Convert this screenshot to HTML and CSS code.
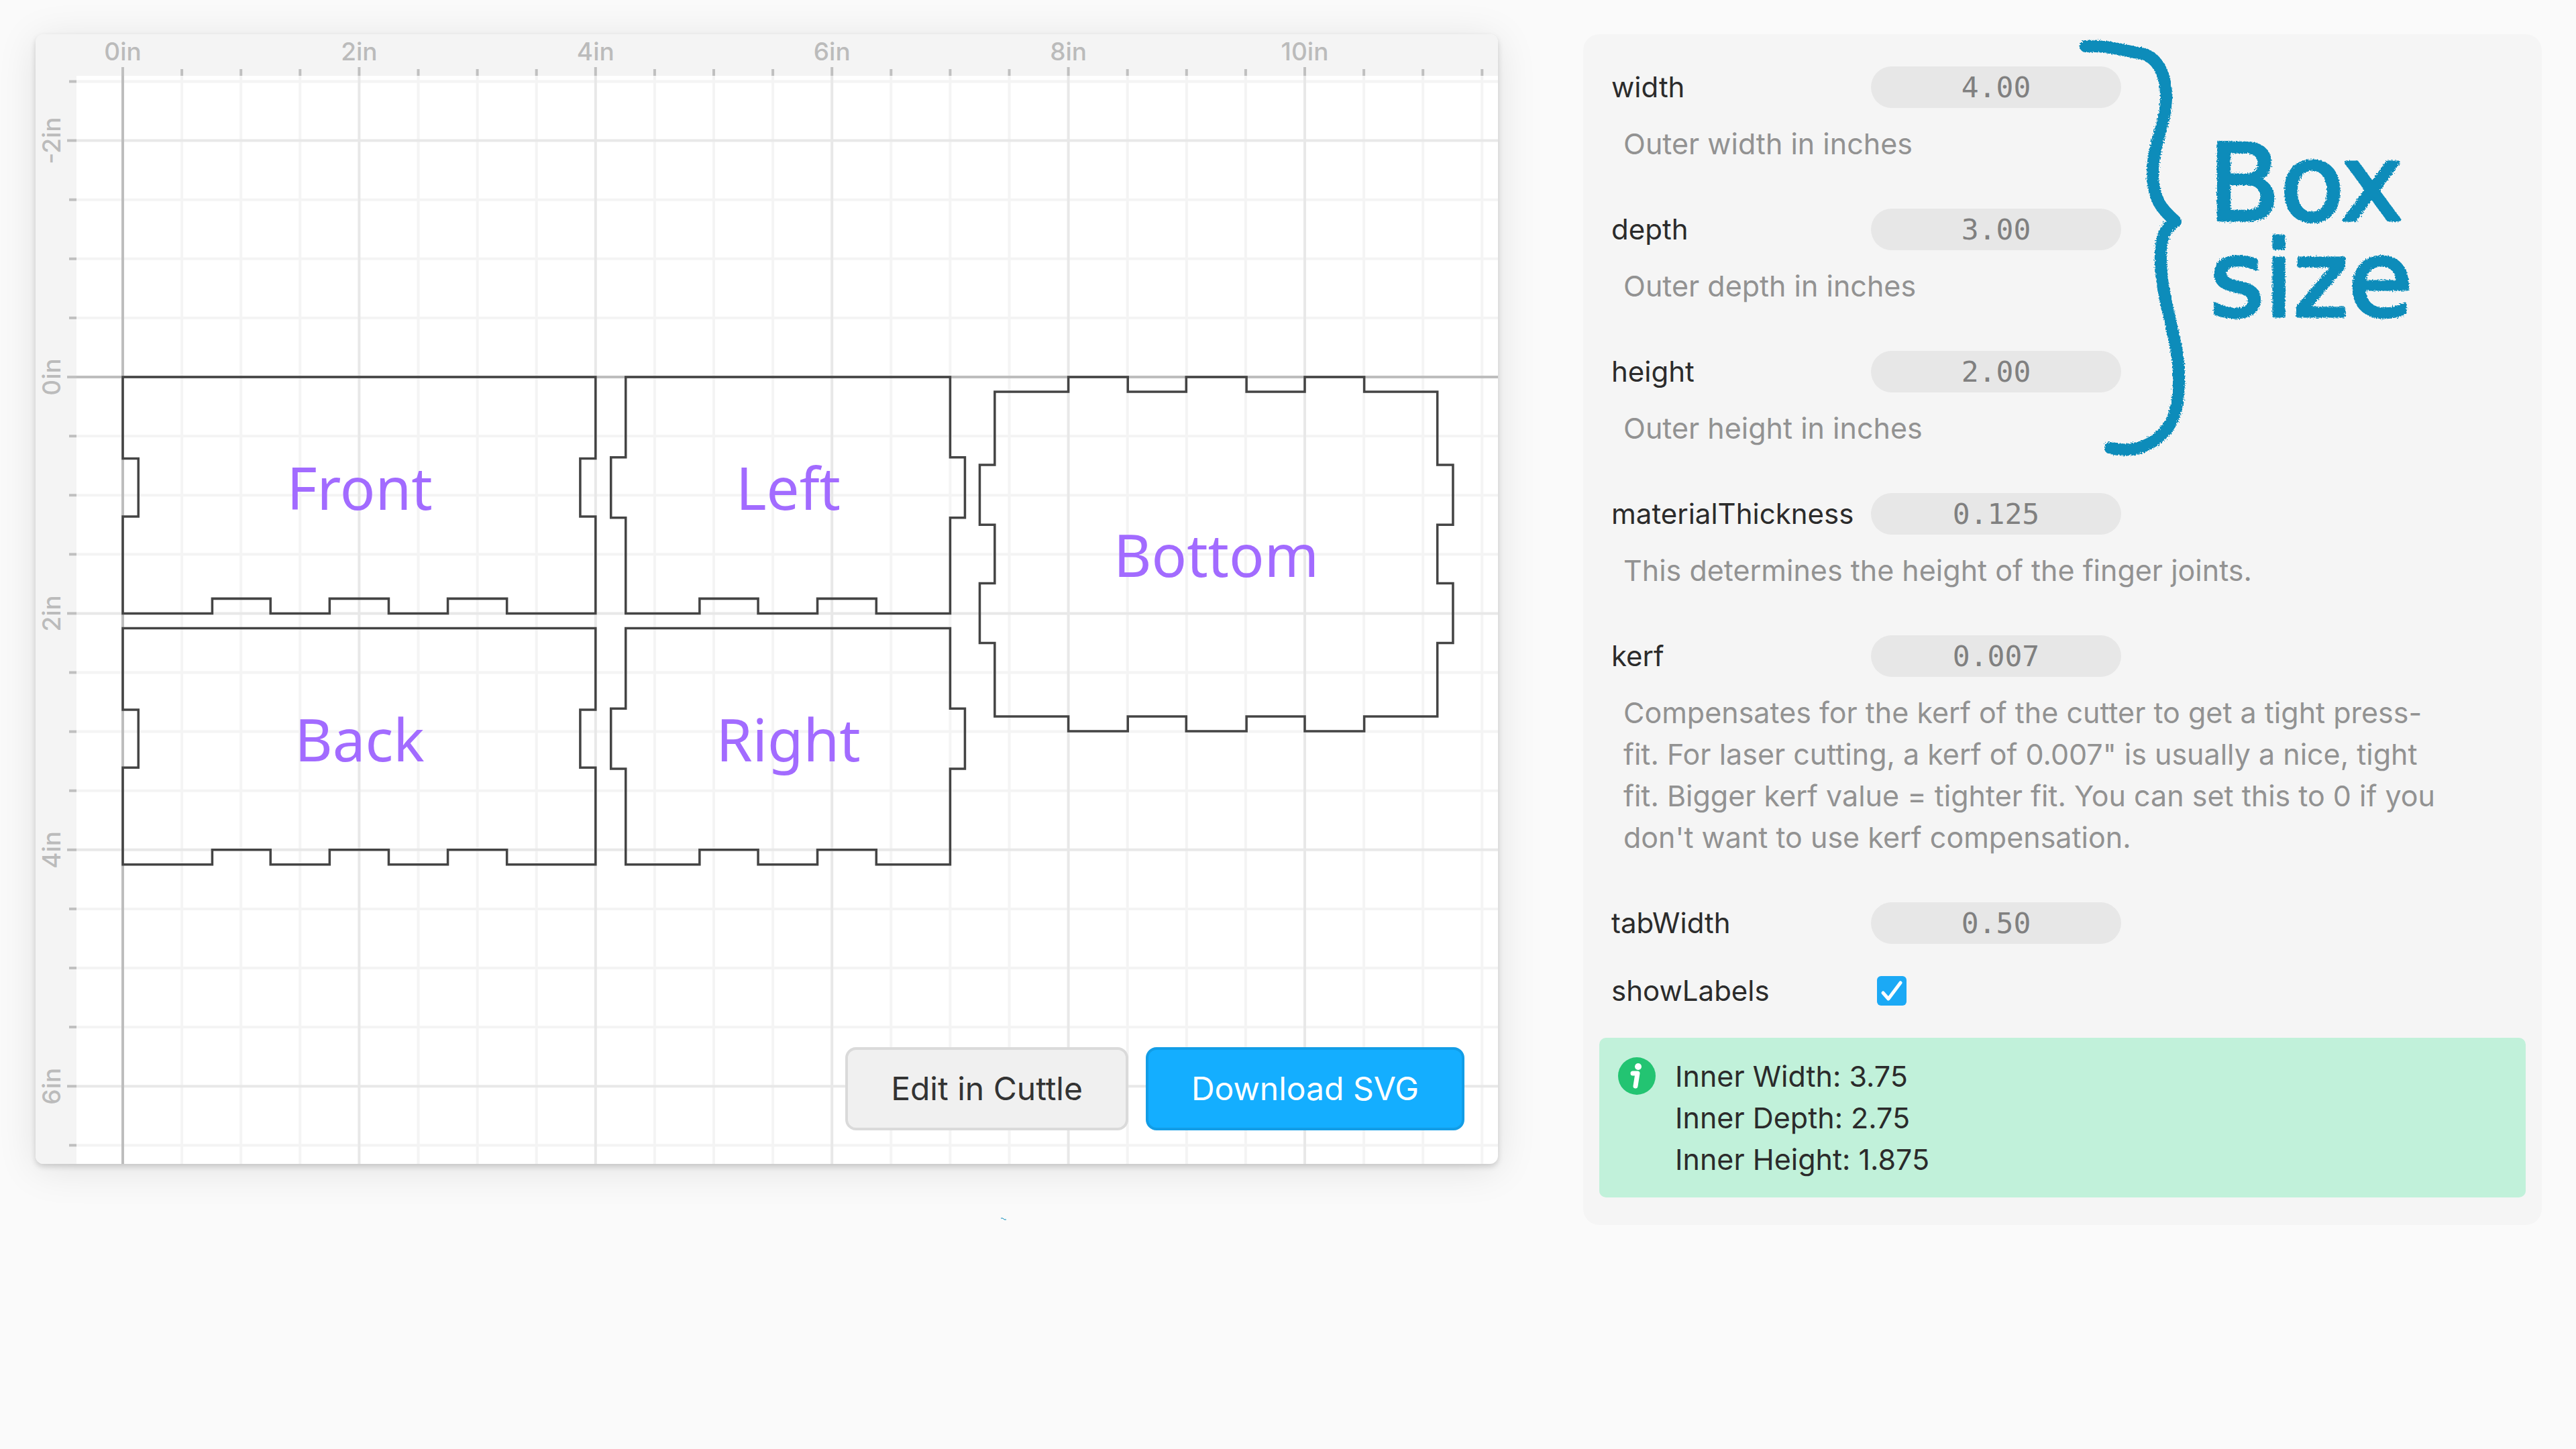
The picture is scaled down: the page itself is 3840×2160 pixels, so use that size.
FILE: index.html
```html
<!DOCTYPE html>
<html lang="en">
<head>
  <meta charset="UTF-8" />
  <meta name="viewport" content="width=device-width, initial-scale=1" />
  <title>Box Generator</title>
  <link rel="stylesheet" href="styles.css">
</head>
<body>

  <main class="page">
    <section class="preview">
      <div class="canvas">
        <svg class="drawing" viewBox="0 0 2180 1684" role="img" aria-label="Box parts">
          <g id="grid"></g>
          <rect class="ruler" x="0" y="0" width="2180" height="62" />
          <rect class="ruler" x="0" y="0" width="61" height="1684" />
          <g id="ticks"></g>

          <!-- parts, in inches from the origin -->
          <g class="parts" transform="translate(130 511) scale(176.2)">
            <path d="M0 0H4V.69H3.87V1.18H4V2H3.25V1.875H2.75V2H2.25V1.875H1.75V2H1.25V1.875H.757V2H0V1.18H.132V.69H0Z" />
            <path d="M0 2.125H4V2.815H3.87V3.305H4V4.125H3.25V4H2.75V4.125H2.25V4H1.75V4.125H1.25V4H.757V4.125H0V3.305H.132V2.815H0Z" />
            <path d="M4.255 0H7V.68H7.125V1.19H7V2H6.375V1.875H5.877V2H5.375V1.875H4.88V2H4.255V1.19H4.13V.68H4.255Z" />
            <path d="M4.255 2.125H7V2.805H7.125V3.315H7V4.125H6.375V4H5.877V4.125H5.375V4H4.88V4.125H4.255V3.315H4.13V2.805H4.255Z" />
            <path d="M7.377 .125H8V0H8.503V.125H8.997V0H9.507V.125H10V0H10.503V.125H11.122V.743H11.254V1.25H11.122V1.745H11.254V2.25H11.122V2.872H10.503V2.997H10V2.872H9.507V2.997H8.997V2.872H8.503V2.997H8V2.872H7.377V2.25H7.25V1.745H7.377V1.25H7.25V.743H7.377Z" />
          </g>

          <g class="part-labels">
            <text x="483" y="709">Front</text>
            <text x="1122" y="709">Left</text>
            <text x="483" y="1084">Back</text>
            <text x="1122" y="1084">Right</text>
            <text x="1760" y="809">Bottom</text>
          </g>
        </svg>
        <div class="actions">
          <button type="button" class="btn">Edit in Cuttle</button>
          <button type="button" class="btn btn-primary">Download SVG</button>
        </div>
      </div>
      <svg class="speck" viewBox="0 0 8 4" aria-hidden="true"><path d="M0 1L3 1L5 3L8 3" /></svg>
    </section>

    <form class="panel">
      <div class="field">
        <label for="width">width</label>
        <input type="text" id="width" value="4.00" />
        <p>Outer width in inches</p>
      </div>
      <div class="field">
        <label for="depth">depth</label>
        <input type="text" id="depth" value="3.00" />
        <p>Outer depth in inches</p>
      </div>
      <div class="field">
        <label for="height">height</label>
        <input type="text" id="height" value="2.00" />
        <p>Outer height in inches</p>
      </div>
      <div class="field">
        <label for="materialThickness">materialThickness</label>
        <input type="text" id="materialThickness" value="0.125" />
        <p>This determines the height of the finger joints.</p>
      </div>
      <div class="field">
        <label for="kerf">kerf</label>
        <input type="text" id="kerf" value="0.007" />
        <p>Compensates for the kerf of the cutter to get a tight press-fit. For laser cutting, a kerf of 0.007" is usually a nice, tight fit. Bigger kerf value = tighter fit. You can set this to 0 if you don't want to use kerf compensation.</p>
      </div>
      <div class="field field-short">
        <label for="tabWidth">tabWidth</label>
        <input type="text" id="tabWidth" value="0.50" />
      </div>
      <div class="field field-short">
        <label for="showLabels">showLabels</label>
        <input type="checkbox" id="showLabels" checked />
      </div>

      <div class="info">
        <svg class="info-icon" viewBox="0 0 56 56" aria-hidden="true">
          <circle cx="28" cy="28" r="28" fill="#23c472" />
          <circle cx="30" cy="14" r="5" fill="#fff" />
          <path d="M22 24H29L26 43" fill="none" stroke="#fff" stroke-width="7" stroke-linecap="round" stroke-linejoin="round" />
        </svg>
        <div>
          <div>Inner Width: 3.75</div>
          <div>Inner Depth: 2.75</div>
          <div>Inner Height: 1.875</div>
        </div>
      </div>

      <!-- marker note beside the first three fields -->
      <svg class="note" viewBox="3090 53 560 640">
        <filter id="chalk" x="-5%" y="-5%" width="110%" height="110%">
          <feTurbulence type="fractalNoise" baseFrequency="0.5" numOctaves="2" seed="4" />
          <feDisplacementMap in="SourceGraphic" scale="7" />
        </filter>
        <g filter="url(#chalk)">
          <path class="brace" d="M3109 71C3142 69 3172 79 3194 82C3220 89 3230 121 3229 150C3228 188 3210 216 3209 256C3208 300 3223 314 3243 332C3223 343 3220 366 3221 395C3223 452 3247 508 3248 559C3249 600 3243 632 3221 651C3199 672 3171 676 3146 670" />
          <text class="note-text" x="3292" y="330">Box</text>
          <text class="note-text" x="3294" y="473">size</text>
        </g>
      </svg>
    </form>
  </main>

  <script>
    const inch = 176.2;
    const originX = 130;
    const originY = 511;
    const grid = document.getElementById("grid");
    const ticks = document.getElementById("ticks");

    function add(parent, name, attrs, text) {
      const el = document.createElementNS("http://www.w3.org/2000/svg", name);
      for (const key in attrs) el.setAttribute(key, attrs[key]);
      if (text) el.textContent = text;
      parent.appendChild(el);
    }

    function lineClass(i) {
      if (i === 0) return "axis";
      return i % 4 === 0 ? "major" : "minor";
    }

    // one step is half an inch; minor lines go first so the others lie on top
    for (const kind of ["minor", "major", "axis"]) {
      for (let i = 0; i <= 23; i++) {
        const x = originX + i * inch / 2;
        if (lineClass(i) !== kind) continue;
        add(grid, "path", { class: kind, d: `M${x} 62V1684` });
        add(ticks, "path", { class: "tick", d: `M${x} ${kind === "minor" ? 52 : 49}V62` });
        if (i % 4 === 0) {
          add(ticks, "text", { class: "ruler-text", x: x, y: 39 }, i / 2 + "in");
        }
      }
      for (let i = -5; i <= 13; i++) {
        const y = originY + i * inch / 2;
        if (lineClass(i) !== kind) continue;
        add(grid, "path", { class: kind, d: `M61 ${y}H2180` });
        add(ticks, "path", { class: "tick", d: `M${kind === "minor" ? 50 : 47} ${y}H61` });
        if (i % 4 === 0) {
          add(ticks, "text", { class: "ruler-text", transform: `translate(37 ${y}) rotate(-90)` }, i / 2 + "in");
        }
      }
    }
  </script>
</body>
</html>
```
FILE: styles.css
```css
* {
  box-sizing: border-box;
}
body {
  margin: 0;
  background-color: #fafafa;
  color: #2b2b2b;
  font-family: Inter, sans-serif;
  font-size: 43px;
  line-height: 62px;
}
.page {
  display: grid;
  grid-template-columns: minmax(0, 2180fr) minmax(0, 1429fr);
  align-items: start;
  gap: 127px;
  padding: 51px 51px 51px 53px;
}
.canvas {
  position: relative;
  background-color: #fff;
  border-radius: 12px;
  box-shadow: 0 4px 8px rgba(0, 0, 0, 0.16), 0 8px 60px rgba(0, 0, 0, 0.1);
}
.drawing {
  display: block;
  width: 100%;
  height: auto;
  border-radius: 12px;
}
.ruler {
  fill: #f4f4f4;
}
.minor {
  stroke: #f4f4f4;
  stroke-width: 4;
}
.major {
  stroke: #e8e8e8;
  stroke-width: 4;
}
.axis {
  stroke: #bdbdbd;
  stroke-width: 4;
}
.tick {
  stroke: #c0c0c0;
  stroke-width: 4;
}
.ruler-text {
  fill: #bbb;
  font-size: 37px;
  font-weight: 500;
  text-anchor: middle;
}
.parts path {
  fill: none;
  stroke: #444;
  stroke-width: 0.02;
}
.part-labels {
  fill: #a26bff;
  font-family: "Noto Sans", sans-serif;
  font-size: 87px;
  text-anchor: middle;
}
.actions {
  position: absolute;
  right: 50px;
  bottom: 50px;
  display: flex;
  gap: 26px;
}
.btn {
  padding: 26px 64px;
  border: 4px solid #dadada;
  border-radius: 16px;
  background-color: #f0f0f0;
  color: #333;
  font-family: inherit;
  font-size: 48px;
  line-height: 64px;
  cursor: pointer;
}
.btn-primary {
  border-color: #129de6;
  background-color: #14aeff;
  color: #fff;
}
.speck {
  display: block;
  width: 8px;
  height: 4px;
  margin: 80px auto 0 66%;
}
.speck path {
  fill: none;
  stroke: #0a8cba;
}
.panel {
  position: relative;
  padding: 48px 24px 41px;
  border-radius: 24px;
  background-color: #f5f5f5;
}
.field {
  display: grid;
  grid-template-columns: 369px 1fr;
  align-items: center;
  row-gap: 22px;
  margin-bottom: 66px;
  padding-left: 18px;
}
.field label {
  font-size: 42px;
}
.field p {
  grid-column: 1 / -1;
  max-width: 1243px;
  margin: 0;
  padding-left: 18px;
  color: #929292;
}
.field-short {
  margin-bottom: 39px;
}
.field input[type="text"] {
  width: 373px;
  height: 62px;
  margin-left: 18px;
  padding: 0;
  border: none;
  border-radius: 31px;
  background-color: #e7e7e7;
  color: #808080;
  font-family: "DejaVu Sans Mono", monospace;
  font-size: 43px;
  text-align: center;
}
.field input[type="checkbox"] {
  appearance: none;
  width: 44px;
  height: 44px;
  margin: 0 0 0 27px;
  border-radius: 6px;
  background: #1ba9f5 url("data:image/svg+xml,%3Csvg xmlns='http://www.w3.org/2000/svg' viewBox='0 0 44 44'%3E%3Cpath d='M9 25L17 34L35 10' fill='none' stroke='white' stroke-width='5' stroke-linecap='round' stroke-linejoin='round'/%3E%3C/svg%3E");
}
.info {
  display: flex;
  gap: 29px;
  padding: 26px 28px;
  border-radius: 10px;
  background-color: #c1f1da;
}
.info-icon {
  flex: none;
  width: 56px;
  height: 56px;
  margin-top: 3px;
}
.note {
  position: absolute;
  top: 0;
  left: 730px;
  width: 560px;
  height: 640px;
  pointer-events: none;
}
.brace {
  fill: none;
  stroke: #0a8cba;
  stroke-width: 18;
  stroke-linecap: round;
  stroke-linejoin: round;
}
.note-text {
  fill: #0a8cba;
  stroke: #0a8cba;
  stroke-width: 5;
  stroke-linejoin: round;
  font-family: "DejaVu Sans", sans-serif;
  font-size: 156px;
}
```
